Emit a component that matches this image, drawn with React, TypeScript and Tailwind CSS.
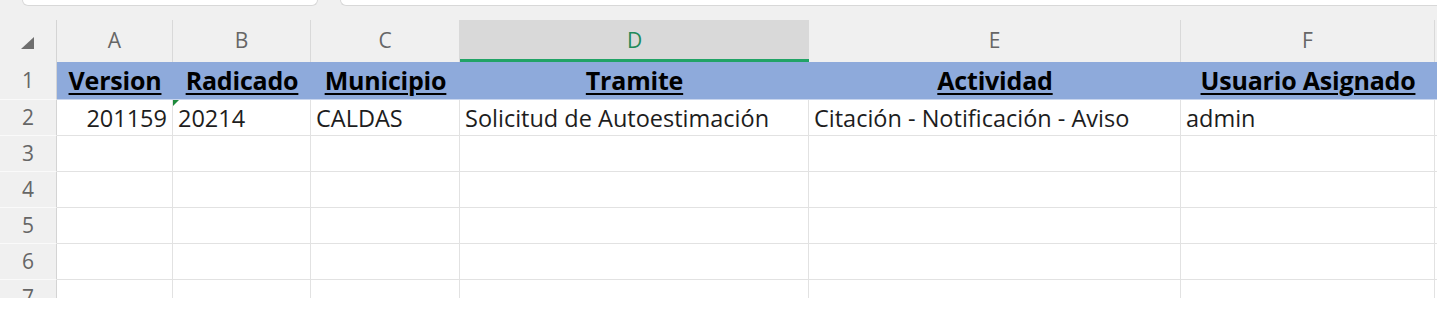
const cols = [
  { key: 'A', w: 'w-[116px]' },
  { key: 'B', w: 'w-[138px]' },
  { key: 'C', w: 'w-[149px]' },
  { key: 'D', w: 'w-[349px]' },
  { key: 'E', w: 'w-[372px]' },
  { key: 'F', w: 'w-[254px]' },
  { key: 'G', w: 'w-[60px]' },
];

const headers = ['Version', 'Radicado', 'Municipio', 'Tramite', 'Actividad', 'Usuario Asignado', ''];

const row2 = [
  { text: '201159', align: 'justify-end' },
  { text: '20214', align: 'justify-start', flag: true },
  { text: 'CALDAS', align: 'justify-start' },
  { text: 'Solicitud de Autoestimación', align: 'justify-start' },
  { text: 'Citación - Notificación - Aviso', align: 'justify-start' },
  { text: 'admin', align: 'justify-start' },
  { text: '', align: 'justify-start' },
];

const font = { fontFamily: '"Open Sans", "Noto Sans", sans-serif' };

export default function App() {
  return (
    <div className="w-[1437px] h-[313px] bg-white overflow-hidden" style={font}>
      {/* formula bar strip */}
      <div className="h-[20px] bg-[#f0f0f0] flex gap-[22px] pl-[22px]">
        <div className="w-[296px] h-[6px] bg-white border border-t-0 border-[#d8d8d8] rounded-b-[8px]" />
        <div className="flex-1 h-[6px] bg-white border border-t-0 border-r-0 border-[#d8d8d8] rounded-bl-[8px]" />
      </div>

      <div className="h-[278px] overflow-hidden">
        {/* column letters */}
        <div className="flex h-[42px] bg-[#f0f0f0]">
          <div className="w-[57px] shrink-0 flex items-end justify-start pl-[21px] pb-[13px] border-r border-[#d4d4d4]">
            <svg width="13" height="12" viewBox="0 0 13 12">
              <polygon points="13,0 13,12 0,12" fill="#6e6e6e" />
            </svg>
          </div>
          {cols.map((c) =>
            c.key === 'D' ? (
              <div
                key={c.key}
                className={`${c.w} shrink-0 flex items-center justify-center bg-[#d9d9d9] border-b-[3px] border-[#21a366] pt-[3px] text-[21px] text-[#1f8a5a]`}
              >
                {c.key}
              </div>
            ) : (
              <div
                key={c.key}
                className={`${c.w} shrink-0 flex items-center justify-center border-r border-[#d9d9d9] text-[21px] text-[#666666]`}
              >
                {c.key === 'G' ? '' : c.key}
              </div>
            )
          )}
        </div>

        {/* row 1 */}
        <div className="flex h-[38px]">
          <div className="w-[57px] shrink-0 bg-[#f0f0f0] border-r border-[#d4d4d4] border-b border-b-[#fafafa] flex items-center justify-center text-[21px] text-[#666666]">
            1
          </div>
          {cols.map((c, i) => (
            <div
              key={c.key}
              className={`${c.w} shrink-0 bg-[#8eaadb] border-b border-[#c9d6ee] flex items-center justify-center`}
            >
              <span className="text-[25px] font-bold text-black underline decoration-[2px] underline-offset-[3px] leading-none tracking-[-0.2px] whitespace-nowrap">
                {headers[i]}
              </span>
            </div>
          ))}
        </div>

        {/* row 2 */}
        <div className="flex h-[36px]">
          <div className="w-[57px] shrink-0 bg-[#f0f0f0] border-r border-[#d4d4d4] border-b border-b-[#fafafa] flex items-center justify-center text-[21px] text-[#666666]">
            2
          </div>
          {cols.map((c, i) => (
            <div
              key={c.key}
              className={`${c.w} shrink-0 relative border-r border-b border-[#e2e2e2] flex items-center pt-[3px] px-[5px] ${row2[i].align}`}
            >
              {row2[i].flag && (
                <svg className="absolute left-0 top-0" width="6" height="6" viewBox="0 0 6 6">
                  <polygon points="0,0 6,0 0,6" fill="#1e8a3c" />
                </svg>
              )}
              <span className="text-[23.5px] text-[#1d1d1d] leading-none whitespace-nowrap">{row2[i].text}</span>
            </div>
          ))}
        </div>

        {/* empty rows */}
        {[3, 4, 5, 6, 7].map((n) => (
          <div key={n} className="flex h-[36px]">
            <div className="w-[57px] shrink-0 bg-[#f0f0f0] border-r border-[#d4d4d4] border-b border-b-[#fafafa] flex items-center justify-center text-[21px] text-[#666666]">
              {n}
            </div>
            {cols.map((c) => (
              <div key={c.key} className={`${c.w} shrink-0 border-r border-b border-[#e2e2e2]`} />
            ))}
          </div>
        ))}
      </div>
    </div>
  );
}
